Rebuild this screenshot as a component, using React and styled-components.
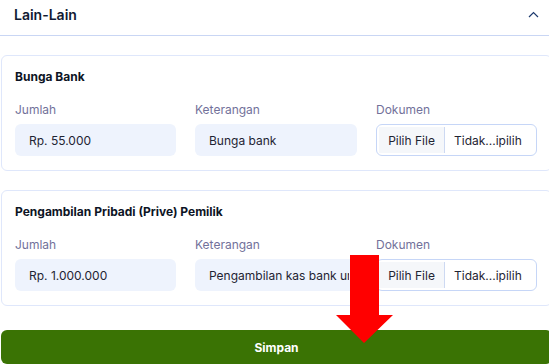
import React from "react";
import styled, { createGlobalStyle } from "styled-components";

const GlobalStyle = createGlobalStyle`
  html, body {
    margin: 0;
    padding: 0;
    background: #ffffff;
    overflow: hidden;
  }
  body {
    font-family: Inter, "Noto Sans", sans-serif;
    color: #1f2937;
  }
`;

const items = [
  {
    title: "Bunga Bank",
    jumlah: "Rp. 55.000",
    keterangan: "Bunga bank",
  },
  {
    title: "Pengambilan Pribadi (Prive) Pemilik",
    jumlah: "Rp. 1.000.000",
    keterangan: "Pengambilan kas bank untuk keperluan pribadi",
  },
];

export default function App() {
  return (
    <>
      <GlobalStyle />
      <StyledPage>
        <StyledHeader>
          <StyledHeading>Lain-Lain</StyledHeading>
          <svg width="11" height="7" viewBox="0 0 11 7" fill="none">
            <path d="M1 6L5.5 1.5L10 6" stroke="#1e3a6e" strokeWidth="1.2" />
          </svg>
        </StyledHeader>

        <StyledBody>
          {items.map((item) => (
            <StyledCard key={item.title}>
              <StyledCardTitle>{item.title}</StyledCardTitle>
              <StyledGrid>
                <StyledField>
                  <StyledLabel>Jumlah</StyledLabel>
                  <StyledInput readOnly value={item.jumlah} />
                </StyledField>
                <StyledField>
                  <StyledLabel>Keterangan</StyledLabel>
                  <StyledInput readOnly value={item.keterangan} />
                </StyledField>
                <StyledField>
                  <StyledLabel>Dokumen</StyledLabel>
                  <StyledFile>
                    <StyledFileButton>Pilih File</StyledFileButton>
                    <StyledFileName>Tidak...ipilih</StyledFileName>
                  </StyledFile>
                </StyledField>
              </StyledGrid>
            </StyledCard>
          ))}

          <StyledSave>Simpan</StyledSave>
        </StyledBody>

        <StyledArrow width="57" height="88" viewBox="0 0 57 88">
          <polygon points="14,0 43,0 43,60 57,60 28,88 0,60 14,60" fill="#ff0000" />
        </StyledArrow>
      </StyledPage>
    </>
  );
}

const StyledPage = styled.div`
  position: relative;
  width: 552px;
  height: 364px;
`;

const StyledHeader = styled.div`
  height: 36px;
  box-sizing: border-box;
  padding: 0 13px 6px 14px;
  display: flex;
  align-items: center;
  justify-content: space-between;
  border-bottom: 1px solid #c9d6f4;
`;

const StyledHeading = styled.h3`
  margin: 0;
  font-size: 14px;
  font-weight: 600;
  color: #101a33;
`;

const StyledBody = styled.div`
  padding: 19px 0 0 1px;
  display: flex;
  flex-direction: column;
  gap: 19px;
`;

const StyledCard = styled.div`
  border: 1px solid #dfe7fb;
  border-radius: 6px;
  padding: 14px 13px 14px 13px;
`;

const StyledCardTitle = styled.div`
  font-size: 12px;
  line-height: 14px;
  font-weight: 700;
  color: #0d1424;
`;

const StyledGrid = styled.div`
  margin-top: 19px;
  display: grid;
  grid-template-columns: 161px 162px 161px;
  column-gap: 19px;
`;

const StyledField = styled.div`
  display: flex;
  flex-direction: column;
  gap: 7px;
`;

const StyledLabel = styled.label`
  font-size: 12px;
  line-height: 14px;
  color: #72719a;
`;

const StyledInput = styled.input`
  height: 32px;
  box-sizing: border-box;
  width: 100%;
  border: none;
  outline: none;
  border-radius: 6px;
  background: #eef3fd;
  padding: 0 8px 0 14px;
  font-family: Inter, "Noto Sans", sans-serif;
  font-size: 12px;
  color: #1f2433;
`;

const StyledFile = styled.div`
  height: 32px;
  box-sizing: border-box;
  display: flex;
  align-items: stretch;
  border: 1px solid #c6d6f7;
  border-radius: 6px;
  overflow: hidden;
  font-size: 12px;
  color: #1f2433;
`;

const StyledFileButton = styled.div`
  width: 66px;
  box-sizing: border-box;
  display: flex;
  align-items: center;
  justify-content: center;
  margin: 2px 0 2px 2px;
  background: #f5f7fa;
  border-right: 1px solid #cdd9f2;
`;

const StyledFileName = styled.div`
  display: flex;
  align-items: center;
  padding-left: 9px;
`;

const StyledSave = styled.button`
  margin-top: 5px;
  height: 34px;
  border: none;
  border-radius: 6px;
  background: #3a7304;
  color: #ffffff;
  font-family: Inter, "Noto Sans", sans-serif;
  font-size: 12px;
  font-weight: 700;
`;

const StyledArrow = styled.svg`
  position: absolute;
  left: 336px;
  top: 255px;
`;
